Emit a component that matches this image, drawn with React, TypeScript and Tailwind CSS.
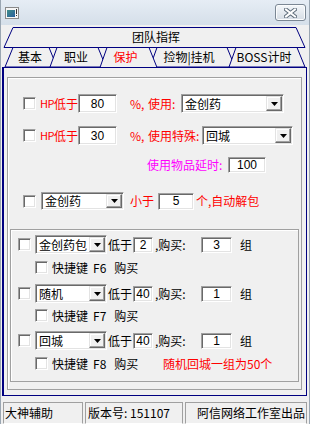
import type { ReactNode } from "react";

const NAVY = "#000080";

function Check() {
  return (
    <span className="block w-[13px] h-[13px] shrink-0 bg-white border border-t-[#a0a0a0] border-l-[#a0a0a0] border-b-white border-r-white shadow-[inset_1px_1px_0_#696969,inset_-1px_-1px_0_#e3e3e3]" />
  );
}

function Edit({ w, h, value, className = "" }: { w: string; h: string; value: string; className?: string }) {
  return (
    <span
      className={`flex items-center justify-center shrink-0 bg-white border border-t-[#a0a0a0] border-l-[#a0a0a0] border-b-white border-r-white shadow-[inset_1px_1px_0_#696969,inset_-1px_-1px_0_#e3e3e3] font-['Liberation_Sans',sans-serif] text-[12px] ${w} ${h} ${className}`}
    >
      {value}
    </span>
  );
}

function Arrow() {
  return (
    <span className="flex items-center justify-center w-[16px] h-full shrink-0 bg-[#f0f0f0] border border-t-[#e3e3e3] border-l-[#e3e3e3] border-b-[#696969] border-r-[#696969] shadow-[inset_-1px_-1px_0_#a0a0a0,inset_1px_1px_0_#fff]">
      <svg width="7" height="4" viewBox="0 0 7 4">
        <path d="M0 0h7L3.5 4z" fill="#000" />
      </svg>
    </span>
  );
}

function Combo({ w, h, text }: { w: string; h: string; text: string }) {
  return (
    <span
      className={`flex items-stretch shrink-0 bg-white border border-t-[#a0a0a0] border-l-[#a0a0a0] border-b-white border-r-white shadow-[inset_1px_1px_0_#696969,inset_-1px_-1px_0_#e3e3e3] p-[1px] ${w} ${h}`}
    >
      <span className="flex-1 flex items-center pl-[2px] text-[12px]">{text}</span>
      <Arrow />
    </span>
  );
}

function Row({ children, className = "" }: { children: ReactNode; className?: string }) {
  return <div className={`flex items-center ${className}`}>{children}</div>;
}

function BuyRow({ item, low, count, mt }: { item: string; low: string; count: string; mt: string }) {
  return (
    <Row className={`h-[19px] pl-[7px] ${mt}`}>
      <Check />
      <span className="ml-[4px]">
        <Combo w="w-[72px]" h="h-[19px]" text={item} />
      </span>
      <span className="ml-[1px] w-[24px]">低于</span>
      <Edit w="w-[20px]" h="h-[16px]" value={low} className="ml-[1px]" />
      <span className="ml-[2px] w-[40px]">,购买:</span>
      <Edit w="w-[31px]" h="h-[16px]" value={count} className="ml-[6px]" />
      <span className="ml-[8px]">组</span>
    </Row>
  );
}

function KeyRow({ k, mt, extra }: { k: string; mt: string; extra?: string }) {
  return (
    <Row className={`h-[13px] pl-[24px] ${mt}`}>
      <Check />
      <span className="ml-[4px] w-[111px] flex items-center">
        <span>快捷键</span>
        <span className="ml-[5px]">{k}</span>
        <span className="ml-[8px]">购买</span>
      </span>
      {extra && <span className="text-[#ff0000]">{extra}</span>}
    </Row>
  );
}

function Tabs() {
  const tab = (x0: number, x1: number, x2: number, x3: number) =>
    `${x0},67 ${x1},47.5 ${x2},47.5 ${x3},67`;
  return (
    <div className="relative h-[42px] shrink-0">
      <svg className="absolute left-0 top-0" width="308" height="43" viewBox="1 25 308 43">
        <polygon points="4,47.5 13,27.5 296,27.5 305,47.5" fill="#f0f0f0" stroke={NAVY} />
        <polygon points={tab(5, 13, 49, 57)} fill="#f0f0f0" stroke={NAVY} />
        <polygon points={tab(50, 57, 98, 106)} fill="#f0f0f0" stroke={NAVY} />
        <polygon points={tab(150, 157, 227, 235)} fill="#f0f0f0" stroke={NAVY} />
        <polygon points={tab(229, 236, 297, 305)} fill="#f0f0f0" stroke={NAVY} />
        <polygon points={tab(100, 107, 149, 157)} fill="#f0f0f0" stroke="none" />
        <polyline points="100,67.5 107,47.5 149,47.5 157,67.5" fill="none" stroke={NAVY} />
      </svg>
      <div className="relative flex flex-col text-[12px]">
        <div className="h-[20px] mt-[2px] flex items-center justify-center pl-[2px]">团队指挥</div>
        <div className="h-[20px] flex items-center pl-[4px]">
          <span className="w-[50px] text-center">基本</span>
          <span className="w-[42px] text-center">职业</span>
          <span className="w-[57px] text-center text-[#ff0000]">保护</span>
          <span className="w-[70px] text-center">捡物|挂机</span>
          <span className="w-[80px] text-center">BOSS计时</span>
        </div>
      </div>
    </div>
  );
}

export default function App() {
  return (
    <div className="w-[310px] h-[424px] flex flex-col overflow-hidden whitespace-nowrap bg-[#f0f0f0] border-x border-[#9aa6b2] text-[12px] leading-none text-black font-['Noto_Sans_CJK_SC','Noto_Sans',sans-serif]">
      <div className="h-[25px] shrink-0 flex items-center justify-between pl-[4px] pr-[3px] bg-linear-to-b from-[#e6edf5] to-[#d5dfe9]">
        <svg width="14" height="12" viewBox="0 0 14 12">
          <defs>
            <linearGradient id="ico" x1="0" y1="0" x2="1" y2="1">
              <stop offset="0%" stopColor="#3f8f8a" />
              <stop offset="100%" stopColor="#2a5f9e" />
            </linearGradient>
          </defs>
          <rect x="0.5" y="0.5" width="13" height="11" fill="#f6f6f6" stroke="#8a8a8a" />
          <rect x="2" y="3" width="8" height="7" fill="url(#ico)" />
          <rect x="11" y="2" width="1" height="5" fill="#333" />
          <rect x="11" y="8" width="1" height="1" fill="#333" />
        </svg>
        <div className="w-[31px] h-[17px] rounded-[3px] border border-[#7b8794] bg-linear-to-b from-[#f4f7fa] to-[#d6dde5] flex items-center justify-center shadow-[inset_0_0_0_1px_#fbfcfd]">
          <svg width="13" height="10" viewBox="0 0 13 10">
            <path d="M2 1.5L11 8.5M11 1.5L2 8.5" stroke="#5d6b79" strokeWidth="4" strokeLinecap="square" />
            <path d="M2 1.5L11 8.5M11 1.5L2 8.5" stroke="#fff" strokeWidth="2" strokeLinecap="square" />
          </svg>
        </div>
      </div>

      <Tabs />

      <div className="ml-[1px] w-[305px] h-[329px] shrink-0 border border-l-2 border-[#000080] pt-[9px] pl-[3px]">
        <div className="w-[295px] h-[313px] border border-[#a0a0a0] shadow-[inset_1px_1px_0_#fff] pt-[16px]">
          <Row className="h-[19px] pl-[15px] text-[#ff0000]">
            <Check />
            <span className="ml-[4px] w-[37px] flex items-center">
              <span className="text-[11px] tracking-[-0.5px]">HP</span>
              <span>低于</span>
            </span>
            <Edit w="w-[39px]" h="h-[19px]" value="80" className="ml-[1px] text-black" />
            <span className="ml-[13px] w-[12px]">%,</span>
            <span className="ml-[6px] w-[32px]">使用:</span>
            <span className="ml-[1px] text-black">
              <Combo w="w-[103px]" h="h-[19px]" text="金创药" />
            </span>
          </Row>
          <Row className="h-[19px] pl-[15px] mt-[13px] text-[#ff0000]">
            <Check />
            <span className="ml-[4px] w-[37px] flex items-center">
              <span className="text-[11px] tracking-[-0.5px]">HP</span>
              <span>低于</span>
            </span>
            <Edit w="w-[39px]" h="h-[19px]" value="30" className="ml-[1px] text-black" />
            <span className="ml-[13px] w-[12px]">%,</span>
            <span className="ml-[6px] w-[53px]">使用特殊:</span>
            <span className="ml-[1px] text-black">
              <Combo w="w-[91px]" h="h-[19px]" text="回城" />
            </span>
          </Row>
          <Row className="h-[16px] pl-[139px] mt-[12px]">
            <span className="w-[81px] text-[#ff00ff]">使用物品延时:</span>
            <Edit w="w-[38px]" h="h-[16px]" value="100" />
          </Row>
          <Row className="h-[18px] pl-[15px] mt-[19px] text-[#ff0000]">
            <Check />
            <span className="ml-[5px] text-black">
              <Combo w="w-[83px]" h="h-[18px]" text="金创药" />
            </span>
            <span className="ml-[6px] w-[26px]">小于</span>
            <Edit w="w-[36px]" h="h-[17px]" value="5" className="ml-[2px] text-black" />
            <span className="ml-[2px]">个,自动解包</span>
          </Row>

          <div className="ml-[2px] mt-[19px] w-[289px] h-[153px] border border-[#a0a0a0] shadow-[inset_1px_1px_0_#fff] pt-[5px]">
            <BuyRow item="金创药包" low="2" count="3" mt="" />
            <KeyRow k="F6" mt="mt-[7px]" />
            <BuyRow item="随机" low="40" count="1" mt="mt-[10px]" />
            <KeyRow k="F7" mt="mt-[6px]" />
            <BuyRow item="回城" low="40" count="1" mt="mt-[9px]" />
            <KeyRow k="F8" mt="mt-[7px]" extra="随机回城一组为50个" />
          </div>
        </div>
      </div>

      <div className="mt-[6px] h-[22px] shrink-0 flex pl-[2px] gap-[2px]">
        <div className="w-[80px] h-full border border-[#a0a0a0] border-b-white flex items-center pl-[1px]">大神辅助</div>
        <div className="w-[98px] h-full border border-[#a0a0a0] border-b-white flex items-center pl-[2px]">版本号: 151107</div>
        <div className="w-[122px] h-full border border-[#a0a0a0] border-b-white flex items-center justify-end pr-[1px]">阿信网络工作室出品</div>
      </div>
    </div>
  );
}
